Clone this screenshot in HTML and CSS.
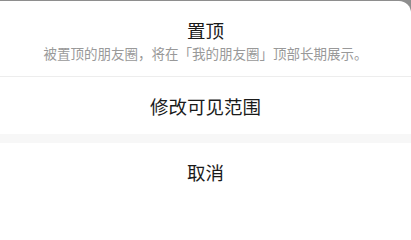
FILE: index.html
```html
<!DOCTYPE html>
<html lang="zh">
<head>
<meta charset="utf-8">
<link rel="stylesheet" href="styles.css">
</head>
<body>
<div class="backdrop">
  <div class="sheet">
    <div class="item head">
      <div class="title">置顶</div>
      <div class="desc">被置顶的朋友圈，将在「我的朋友圈」顶部长期展示。</div>
    </div>
    <div class="item option">修改可见范围</div>
    <div class="gap"></div>
    <div class="item cancel">取消</div>
    <div class="safe"></div>
  </div>
</div>
</body>
</html>
```
FILE: styles.css
```css
html, body {
  margin: 0;
  padding: 0;
  background: #fff;
}
body {
  font-family: "Noto Sans CJK SC", "Noto Sans", sans-serif;
  color: #1a1a1a;
}
.backdrop {
  background: linear-gradient(#8e8e8e, #8e8e8e) top / 100% 12px no-repeat;
  padding-top: 1px;
}
.sheet {
  background: #fff;
  border-top-right-radius: 12px;
  display: flex;
  flex-direction: column;
  height: 208px;
}
.item {
  display: flex;
  flex-direction: column;
  align-items: center;
  justify-content: center;
  text-align: center;
  flex: none;
}
.head {
  height: 76px;
  border-bottom: 1px solid #ededed;
  padding-top: 2px;
  box-sizing: border-box;
}
.title {
  font-size: 18.5px;
  line-height: 24px;
}
.desc {
  font-size: 13.5px;
  line-height: 18px;
  color: #999;
  margin-top: 2px;
}
.option {
  height: 57px;
  font-size: 18.5px;
}
.gap {
  height: 9px;
  flex: none;
  background: #f7f7f7;
}
.cancel {
  height: 58px;
  font-size: 18.5px;
}
.safe {
  flex: 1;
}
```
